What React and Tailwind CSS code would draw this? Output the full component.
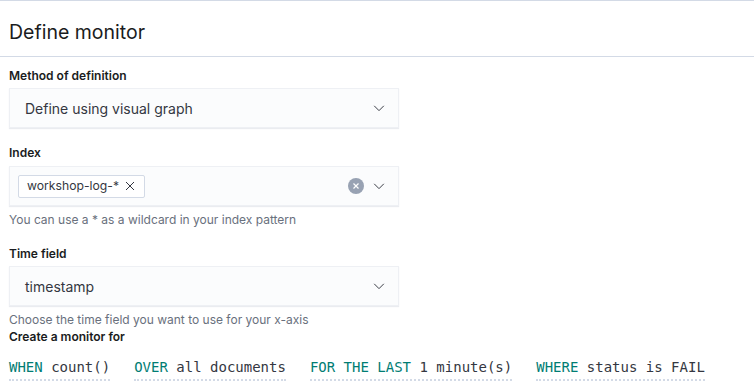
import React from 'react'

const Chevron = () => (
  <svg width="14" height="14" viewBox="0 0 16 16" fill="none" className="text-[#343741]">
    <path d="M2.5 5.5 8 11l5.5-5.5" stroke="currentColor" strokeWidth="1.1" />
  </svg>
)

function SelectBox({ children, right }) {
  return (
    <div className="w-[390px] h-[40px] flex items-center justify-between bg-[#fbfcfd] border border-[#eef0f4] shadow-[0_1px_1px_rgba(152,162,179,0.2)] pl-[15px] pr-[12px]">
      <div className="flex items-center">{children}</div>
      <div className="flex items-center gap-[8px]">
        {right}
        <Chevron />
      </div>
    </div>
  )
}

function Clause({ k, v }) {
  return (
    <span className="border-b-2 border-dotted border-[#d3dae6] pb-[3px]">
      <span className="text-[#017d73]">{k}</span> <span className="text-[#343741]">{v}</span>
    </span>
  )
}

export default function App() {
  return (
    <div className="w-[754px] h-[387px] bg-white border-t border-[#d3dae6] overflow-hidden font-['Inter',sans-serif] text-[#1a1c21]">
      <div className="h-[56px] flex items-center px-[9px] border-b border-[#d3dae6]">
        <h2 className="text-[19.5px] font-normal leading-none pt-[9px]">Define monitor</h2>
      </div>
      <div className="px-[9px] pt-[11px]">
        <div className="text-[12px] font-semibold leading-[16px] mb-[4px]">Method of definition</div>
        <SelectBox>
          <span className="text-[14px] text-[#343741]">Define using visual graph</span>
        </SelectBox>

        <div className="text-[12px] font-semibold leading-[16px] mt-[17px] mb-[5px]">Index</div>
        <SelectBox
          right={
            <span className="w-[16px] h-[16px] rounded-full bg-[#98a2b3] flex items-center justify-center">
              <svg width="8" height="8" viewBox="0 0 8 8">
                <path d="M1.5 1.5l5 5M6.5 1.5l-5 5" stroke="#fff" strokeWidth="1.2" />
              </svg>
            </span>
          }
        >
          <span className="-ml-[7px] h-[23px] flex items-center gap-[6px] bg-white border border-[#d3dae6] rounded-[2px] pl-[8px] pr-[9px] text-[12.2px] text-[#343741]">
            workshop-log-*
            <svg width="10" height="10" viewBox="0 0 10 10">
              <path d="M1 1l8 8M9 1l-8 8" stroke="#343741" strokeWidth="1" />
            </svg>
          </span>
        </SelectBox>
        <div className="text-[12px] text-[#69707d] leading-[16px] mt-[6px]">You can use a * as a wildcard in your index pattern</div>

        <div className="text-[12px] font-semibold leading-[16px] mt-[18px] mb-[4px]">Time field</div>
        <SelectBox>
          <span className="text-[14px] text-[#343741]">timestamp</span>
        </SelectBox>
        <div className="text-[12px] text-[#69707d] leading-[16px] mt-[6px]">Choose the time field you want to use for your x-axis</div>
        <div className="text-[12px] font-semibold leading-[16px] mt-[1px]">Create a monitor for</div>
        <div className="mt-[13px] flex gap-[24px] font-['DejaVu_Sans_Mono',monospace] text-[14px] leading-[18px]">
          <Clause k="WHEN" v="count()" />
          <Clause k="OVER" v="all documents" />
          <Clause k="FOR THE LAST" v="1 minute(s)" />
          <Clause k="WHERE" v="status is FAIL" />
        </div>
      </div>
    </div>
  )
}
